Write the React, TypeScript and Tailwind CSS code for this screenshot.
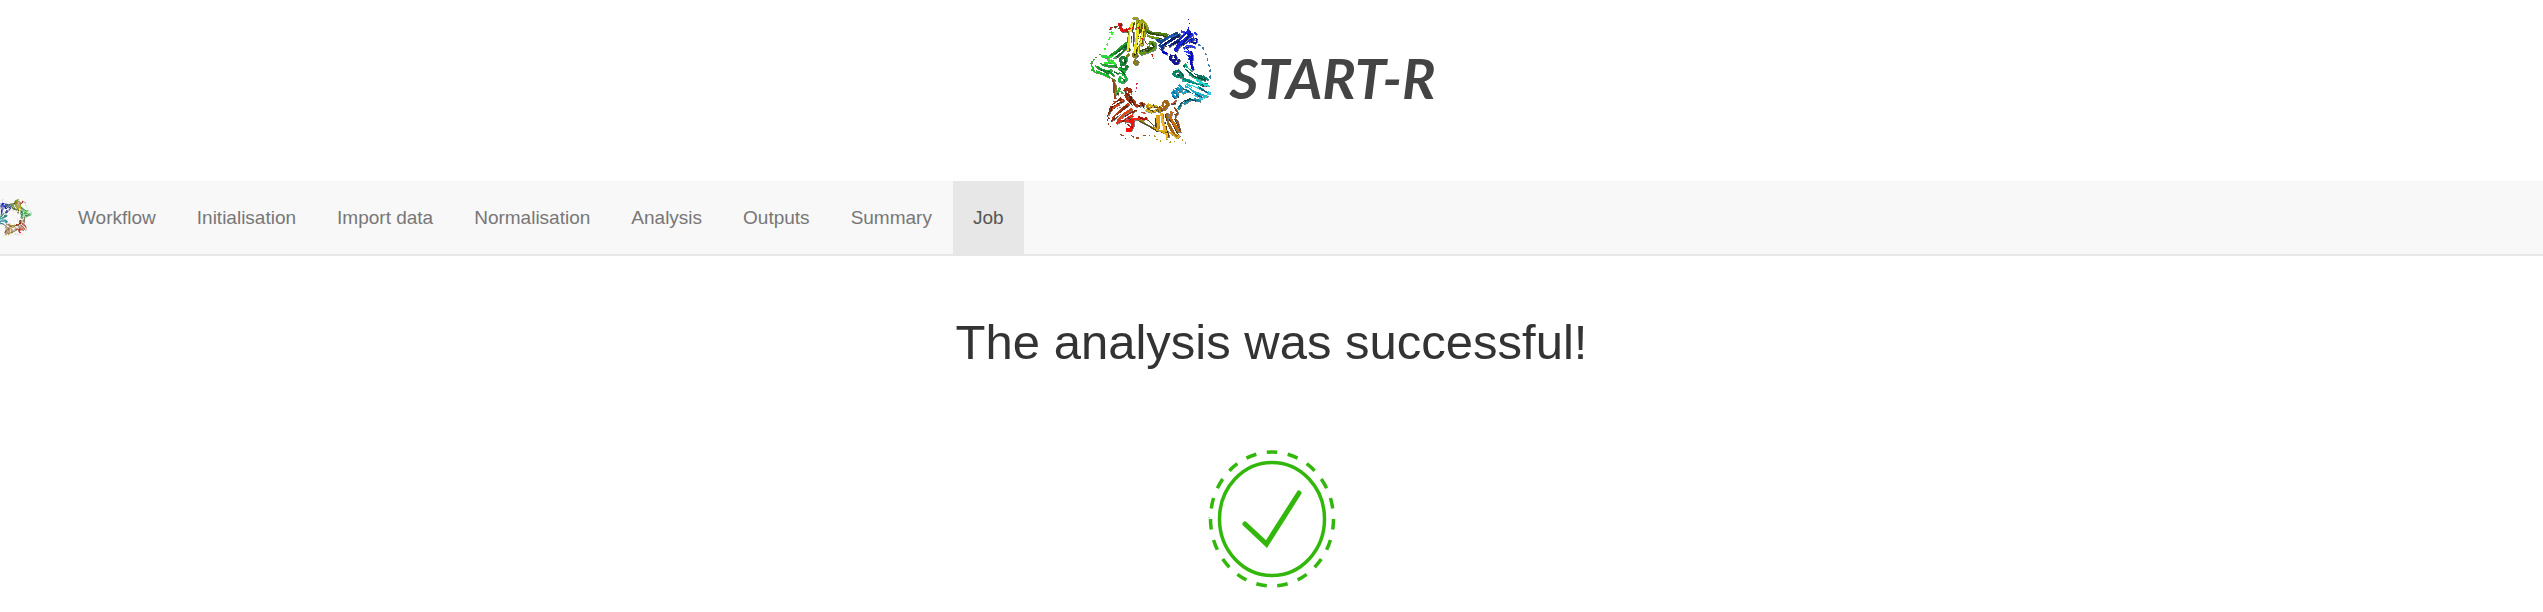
type Strand = { d: string; color: string; width?: number; dash?: string };

const strands: Strand[] = [
  // green, left
  { color: "#1f9a2c", width: 8, d: "M88 160 L112 143 L134 124 L150 112" },
  { color: "#17752c", width: 6, d: "M112 160 L132 140 L154 122" },
  { color: "#0c6a24", width: 4, d: "M108 150 L150 116" },
  { color: "#27d83a", width: 8, d: "M66 156 L92 160 L112 158" },
  { color: "#2ee82e", width: 6, d: "M76 178 L98 174 L112 182 M84 168 L104 170 M102 172 L112 190" },
  { color: "#19a52b", width: 6, d: "M62 180 L86 186 L112 186" },
  { color: "#14c814", width: 4, d: "M36 180 L40 172 M38 184 L44 202 L52 206 M36 196 L44 200 M48 186 L60 190" },
  { color: "#10962c", width: 7, d: "M54 190 L76 200 L96 206 L104 216" },
  { color: "#1cc02a", width: 7, d: "M50 202 L72 210 L92 220 M84 198 L100 200" },
  { color: "#0d7c22", width: 4, d: "M66 196 L88 210 M104 202 L118 210" },
  { color: "#35f02a", width: 5, dash: "9 9", d: "M102 84 L92 102 L84 122 L76 138 M90 86 L100 84" },
  { color: "#5a8f3a", width: 4, dash: "5 5", d: "M52 158 L46 166 L40 174 M62 150 L66 158" },
  { color: "#0f7f2b", width: 8, d: "M128 178 L122 166 L130 158 L142 164 L136 180 L124 184 L126 196 L140 194 L146 184" },
  { color: "#19b63a", width: 7, d: "M118 192 L130 202 L140 202 M120 208 L140 214 M124 216 L120 230 L130 236 L142 226 L136 214" },
  { color: "#0a5f22", width: 3, d: "M134 162 L138 176 M124 198 L136 210 M130 222 L136 230" },
  // yellow and olive, top
  { color: "#e01212", width: 9, d: "M122 58 L124 72 L132 82 L146 78" },
  { color: "#c40d0d", width: 5, d: "M92 74 L96 72 M106 70 L112 68 M120 62 L130 60 M142 72 L146 86" },
  { color: "#4c5624", width: 3, dash: "4 4", d: "M92 78 L100 70 L112 66 L120 74" },
  { color: "#6d7913", width: 11, d: "M162 54 L152 88 L148 140 M176 50 L178 84 L168 156" },
  { color: "#e4df1f", width: 8, d: "M160 54 L154 84 L146 142 M178 52 L176 88 L166 150" },
  { color: "#b0b316", width: 10, d: "M194 54 L196 80 L186 126 M184 48 L188 76 L184 110" },
  { color: "#f3ea31", width: 5, d: "M194 58 L190 90 L186 118 M180 98 L178 146" },
  { color: "#584f17", width: 3, d: "M168 56 L164 94 L162 128 M190 56 L182 92 L174 132 M202 62 L198 82" },
  { color: "#98a11a", width: 6, d: "M160 46 L164 42 L178 42 M172 56 L178 44 M188 46 L200 60 L206 74 L198 88" },
  { color: "#db251c", width: 4, dash: "9 5", d: "M146 76 L170 70 L192 74 M188 102 L202 118 L210 134 L218 150 L224 164" },
  { color: "#8a7a15", width: 6, d: "M164 146 L162 156 L168 160 L176 152 M170 166 L164 178 L172 182 L178 170 M150 148 L142 158" },
  { color: "#537b15", width: 10, d: "M198 78 L218 88 L242 90 L266 94" },
  { color: "#2f4a11", width: 4, d: "M204 84 L232 92 L262 98 M214 100 L250 104" },
  { color: "#6f9a18", width: 7, d: "M204 94 L222 100 L240 104" },
  { color: "#55981a", width: 9, d: "M216 138 L208 124 L216 114 L228 118 L226 134 L212 140 L194 146 L182 150" },
  { color: "#304b10", width: 4, d: "M202 142 L224 126 L218 118 M182 142 L210 130" },
  // blue, upper right
  { color: "#17468c", width: 8, d: "M232 106 L250 118 L240 128 M244 114 L272 98 L296 86" },
  { color: "#1d5db6", width: 8, d: "M256 124 L280 106 L304 90 M262 106 L286 92" },
  { color: "#142d91", width: 9, d: "M268 126 L294 112 L308 102 M248 140 L252 124 L264 120" },
  { color: "#0b1a63", width: 3, d: "M252 120 L300 92 M268 114 L302 98 M280 120 L302 108" },
  { color: "#1820cf", width: 12, d: "M332 78 L314 98 L300 122 L288 142" },
  { color: "#1632e6", width: 9, d: "M342 90 L322 104 L308 122 M346 104 L330 112 L312 132" },
  { color: "#0d10a2", width: 4, d: "M336 84 L306 126 M348 102 L354 106 L350 118 L338 116 L336 106 M340 124 L322 132 L330 144" },
  { color: "#2a38ee", width: 6, d: "M324 124 L348 130 M314 138 L338 150 M346 84 L354 92 M306 82 L318 86" },
  { color: "#1515e8", width: 4, dash: "5 8", d: "M328 44 L332 54 L328 68 L330 78" },
  { color: "#15178f", width: 8, d: "M278 152 L272 164 L282 170 L292 162 L286 152 M286 168 L284 178 L296 178 L300 166" },
  { color: "#0b0bc6", width: 7, d: "M250 144 L264 148 L260 152 M336 142 L340 160 L336 176 L342 198 M330 152 L338 178" },
  { color: "#2c54d4", width: 3, dash: "6 8", d: "M244 130 L238 140 M322 150 L330 166 L326 178" },
  { color: "#347aa5", width: 4, dash: "9 9", d: "M356 122 L370 126 L376 144 L384 156 L386 176 L392 188 L394 210 L392 232" },
  // teal and cyan, right
  { color: "#0b7155", width: 7, d: "M314 184 L326 198 L346 212 L382 222" },
  { color: "#19a77e", width: 7, d: "M318 178 L324 194 L338 202 M330 210 L354 224 L378 228" },
  { color: "#0a866d", width: 8, d: "M286 200 L284 212 L296 218 L306 210 L300 200 L290 202 M298 216 L310 220 L308 208" },
  { color: "#064f42", width: 3, d: "M288 204 L300 214 M318 196 L344 216 L380 228 M304 204 L312 214" },
  { color: "#0bb8a4", width: 8, d: "M308 228 L330 230 L352 240 L382 244" },
  { color: "#07867f", width: 6, d: "M312 222 L336 234 L362 246 L386 238 M372 216 L388 228" },
  { color: "#22d8d4", width: 6, d: "M322 240 L346 250 L370 256 M372 240 L390 246 M350 226 L372 238" },
  { color: "#1499c7", width: 7, d: "M286 258 L280 268 L286 280 L296 276 L294 262 L284 264 M300 242 L308 252 L304 264 L296 250" },
  { color: "#0b6d91", width: 3, d: "M282 262 L298 278 M288 252 L302 262 M280 276 L290 284" },
  { color: "#16b1d0", width: 6, d: "M308 268 L334 258 L362 270 L386 278 M318 246 L342 262 L356 278" },
  { color: "#08637d", width: 4, d: "M312 254 L344 268 L370 280 M360 250 L388 268" },
  { color: "#2ac8e6", width: 5, dash: "12 4", d: "M390 262 L384 276 L370 286 L356 288 M346 274 L372 286 M394 264 L392 274" },
  { color: "#178daa", width: 6, d: "M314 300 L330 288 L350 286 L364 292 M306 302 L296 316" },
  { color: "#0a5266", width: 3, d: "M312 292 L334 284 L352 292 M300 306 L310 294" },
  // brown and red, lower left
  { color: "#8f4714", width: 6, d: "M100 224 L106 240 L106 262 L108 284" },
  { color: "#6a6f22", width: 4, d: "M96 222 L110 230 M110 240 L112 262 L118 272" },
  { color: "#2bbf2b", width: 5, d: "M122 250 L116 264 L108 272 M124 260 L130 268" },
  { color: "#9b3009", width: 10, d: "M136 262 L142 254 L154 258 L152 270 L140 272 L146 284 L160 282" },
  { color: "#ab3a10", width: 11, d: "M146 286 L164 292 L170 304 L188 300 L196 304" },
  { color: "#5d1705", width: 3, d: "M138 264 L152 278 L164 300 M156 276 L150 292 L160 304 M176 296 L182 310 M188 296 L194 312" },
  { color: "#bb3c12", width: 8, d: "M134 286 L112 302 L92 320 M150 300 L126 318 L100 344" },
  { color: "#d94618", width: 7, d: "M104 296 L132 290 M98 312 L122 306 M160 314 L136 330 L114 350" },
  { color: "#8e260b", width: 5, d: "M126 282 L96 308 L88 334 M142 304 L116 334 L96 352 M172 318 L148 332 L128 352" },
  { color: "#ea2814", width: 7, d: "M112 358 L136 344 L162 334 M136 354 L158 346 L186 344" },
  { color: "#fa0f0b", width: 10, d: "M150 352 L162 350 L160 366 L154 378 L142 378" },
  { color: "#a91910", width: 4, d: "M146 360 L158 370 M138 334 L154 344 M176 338 L204 346 M188 350 L204 340" },
  { color: "#7c3818", width: 4, dash: "5 7", d: "M94 312 L84 342 L86 356 L96 368 M88 340 L100 356" },
  { color: "#df2340", width: 4, dash: "5 7", d: "M174 238 L172 252 L174 258 L164 268" },
  { color: "#9e4c24", width: 4, dash: "10 8", d: "M124 392 L134 396 L142 404 M156 394 L168 402 L180 402 L184 392 M192 394 L212 394" },
  // gold, bottom
  { color: "#b78a14", width: 8, d: "M204 304 L208 316 L220 306 L224 320 L236 312 L240 324 L246 308" },
  { color: "#d5b31c", width: 6, d: "M200 318 L216 324 L232 320 M206 300 L220 308 L234 306" },
  { color: "#5f460a", width: 3, d: "M204 312 L222 322 M222 302 L238 320 M240 306 L250 322" },
  { color: "#a7650d", width: 8, d: "M250 298 L262 290 L268 300 L258 312 L248 302 M244 314 L258 316" },
  { color: "#9c8113", width: 7, d: "M184 350 L202 358 L218 368 L236 380" },
  { color: "#5a4a0a", width: 3, d: "M178 350 L206 364 L232 380 M208 350 L224 364" },
  { color: "#dca018", width: 12, d: "M236 334 L238 356 L232 376" },
  { color: "#efb520", width: 8, d: "M248 328 L250 352 L258 378 L266 400 M246 380 L264 388" },
  { color: "#a5640c", width: 8, d: "M264 326 L264 352 L278 378 L294 398" },
  { color: "#c66c10", width: 8, d: "M278 322 L272 342 L286 360 L300 384" },
  { color: "#5e3007", width: 3, d: "M258 330 L262 370 L270 398 M270 346 L298 392 M286 344 L304 380 M228 342 L230 370" },
  { color: "#8e4c14", width: 4, d: "M288 316 L296 326 L288 342 L296 352 L304 384 M276 300 L288 298 M284 310 L294 318 M282 334 L296 328" },
  { color: "#d4a91b", width: 5, d: "M232 378 L254 384 L266 378 M272 384 L294 402 L302 394" },
  { color: "#b59d28", width: 4, dash: "5 8", d: "M226 394 L232 406 L246 412 M262 404 L272 414 L288 412 M290 388 L306 402 L314 412 L324 422" },
  { color: "#c4482a", width: 4, d: "M276 300 L286 296 L292 288 M188 324 L198 328" },
];

function Ring({ className, viewBox, label }: { className: string; viewBox: string; label: string }) {
  return (
    <svg className={className} viewBox={viewBox} role="img" aria-label={label} fill="none" strokeLinejoin="bevel" shapeRendering="crispEdges">
      {strands.map((s, i) => (
        <g key={i} strokeWidth={s.width ?? 4} strokeDasharray={s.dash}>
          {/* shaded lower edge of the ribbon */}
          {!s.dash && <path d={s.d} stroke="#000000" strokeOpacity="0.5" transform="translate(2 2)" />}
          <path d={s.d} stroke={s.color} />
        </g>
      ))}
      {/* breaks between ribbons */}
      <path
        stroke="#ffffff"
        strokeWidth="4"
        d="M94 166 L132 138 M70 190 L94 198 M116 176 L124 188 M62 182 L76 190 M128 188 L138 190 M122 210 L130 214 M156 84 L154 136 M184 88 L176 130 M170 52 L166 84 M186 132 L210 122 M214 94 L256 100 M214 126 L222 128 M262 126 L298 102 M304 110 L324 92 M304 134 L330 116 M246 122 L276 102 M318 122 L342 120 M282 158 L286 164 M300 140 L326 140 M318 190 L354 218 M292 208 L298 210 M328 238 L370 248 M324 252 L348 272 M336 246 L372 266 M286 270 L290 274 M104 318 L136 298 M108 340 L150 310 M128 348 L160 328 M98 306 L122 292 M94 332 L110 320 M152 268 L158 276 M170 296 L182 302 M212 316 L234 314 M256 300 L262 302 M244 338 L246 370 M258 342 L268 378 M274 354 L292 390 M284 330 L288 346 M194 352 L222 366"
      />
    </svg>
  );
}

const tabs = ["Workflow", "Initialisation", "Import data", "Normalisation", "Analysis", "Outputs", "Summary", "Job"];

export default function App() {
  return (
    <div className="min-h-screen bg-white font-['Liberation_Sans',Arial,sans-serif] text-[#333333]">
      <header className="flex h-[181px] items-start justify-center pt-1">
        <Ring className="h-[150px] w-[150px] shrink-0" viewBox="0 0 450 450" label="START-R ring" />
        <span className="pt-[34px] pr-7 font-['Lato',sans-serif] text-[56px] leading-[80px] font-bold text-[#444444] italic">START-R</span>
      </header>

      <nav className="flex h-[75px] items-stretch border-b-2 border-[#e7e7e7] bg-[#f8f8f8]">
        <a href="#home" className="flex w-[58px] items-center">
          <Ring className="h-[38px] w-8 -scale-x-100" viewBox="30 38 324 386" label="Home" />
        </a>
        <ul className="flex gap-px text-[19px] leading-8">
          {tabs.map((tab) => (
            <li key={tab} className="flex">
              <a
                href={"#" + tab.toLowerCase().replace(" ", "-")}
                aria-current={tab === "Job" ? "page" : undefined}
                className={tab === "Job" ? "flex items-center bg-[#e7e7e7] px-5 text-[#555555]" : "flex items-center px-5 text-[#777777]"}
              >
                {tab}
              </a>
            </li>
          ))}
        </ul>
      </nav>

      <main className="flex flex-col items-center pt-[54px]">
        <h1 className="text-[49px] leading-16 font-normal">The analysis was successful!</h1>
        <svg className="mt-[75px] h-[140px] w-[128px]" viewBox="0 0 128 140" fill="none" stroke="#33b70c" role="img" aria-label="Success">
          <ellipse cx="64" cy="70" rx="52.5" ry="56.5" strokeWidth="3.5" />
          <ellipse cx="64" cy="70" rx="61.5" ry="67" strokeWidth="3.5" pathLength="190" strokeDasharray="5 5" strokeDashoffset="50" />
          <path d="M37 75 L58.500 95 L91 44" strokeWidth="5" strokeLinecap="round" />
        </svg>
      </main>
    </div>
  );
}
